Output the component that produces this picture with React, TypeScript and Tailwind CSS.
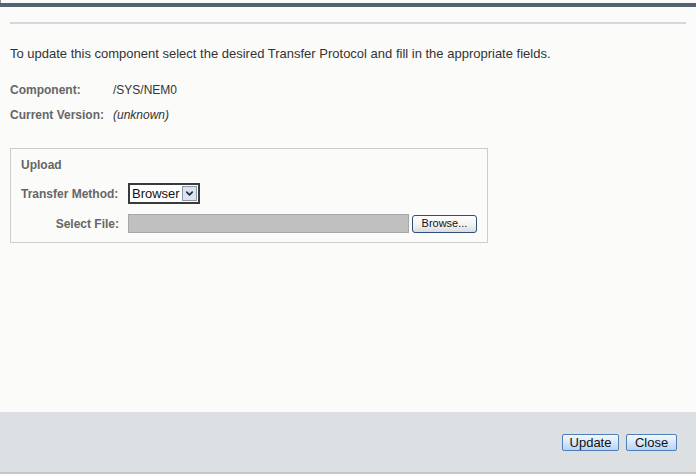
import { ChevronDown } from "lucide-react";

function BlueButton({ label, className = "" }: { label: string; className?: string }) {
	return (
		<button
			className={`h-[17px] rounded-[2px] border border-[#4f7fb8] bg-gradient-to-b from-[#f2f8ff] via-[#d6e7fb] to-[#b9d3f1] text-[13px] leading-none text-[#111] ${className}`}
		>
			{label}
		</button>
	);
}

export default function App() {
	return (
		<div className="flex h-[475px] w-[696px] flex-col bg-[#fbfbf9] font-['Liberation_Sans',Arial,sans-serif] text-[12px] text-[#333]">
			<div className="h-[3px] w-full border-l border-[#8a96a0]" />
			<div className="h-[4px] w-full bg-[#546371]" />
			<div className="px-[10px] pt-[15px]">
				<div className="h-[2px] w-full bg-[#d2d8db]" />
			</div>
			<div className="flex-1 px-[10px]">
				<p className="mt-[22px] text-[13px] leading-[15px]">
					To update this component select the desired Transfer Protocol and fill in the appropriate fields.
				</p>
				<div className="mt-[22px] flex flex-col gap-[10px] leading-[15px]">
					<div className="flex">
						<span className="w-[103px] font-bold text-[#666]">Component:</span>
						<span>/SYS/NEM0</span>
					</div>
					<div className="flex">
						<span className="w-[103px] font-bold text-[#666]">Current Version:</span>
						<span className="italic">(unknown)</span>
					</div>
				</div>
				<div className="mt-[25px] w-[478px] border border-[#cccccc] px-[10px] pb-[9px] pt-[9px]">
					<div className="font-bold leading-[15px] text-[#666]">Upload</div>
					<div className="mt-[10px] flex items-center">
						<span className="w-[107px] font-bold text-[#666]">Transfer Method:</span>
						<div className="flex h-[21px] w-[72px] items-center border-2 border-[#3a3a3a] bg-white pl-[2px]">
							<span className="flex-1 text-[13px] text-[#111]">Browser</span>
							<span className="mr-[1px] flex h-[15px] w-[15px] items-center justify-center border border-[#8c97a8] bg-[#dde2ec]">
								<ChevronDown size={11} strokeWidth={3.5} className="text-[#1a2a48]" />
							</span>
						</div>
					</div>
					<div className="mt-[10px] flex items-center">
						<span className="w-[98px] text-right font-bold text-[#666]">Select File:</span>
						<div className="ml-[9px] h-[19px] w-[281px] border border-[#a8a8a8] bg-[#c0c0c0]" />
						<button className="ml-[3px] h-[18px] w-[65px] rounded-[3px] border border-[#2f4f7f] bg-gradient-to-b from-white via-[#f4f4f4] to-[#dcdcdc] text-[11px] leading-none text-[#111]">
							Browse...
						</button>
					</div>
				</div>
			</div>
			<div className="flex h-[62px] items-center justify-end gap-[7px] border-b-2 border-[#c4c6c8] bg-[#dce0e3] pr-[19px]">
				<BlueButton label="Update" className="w-[57px]" />
				<BlueButton label="Close" className="w-[51px]" />
			</div>
			<div className="h-[1px]" />
		</div>
	);
}
